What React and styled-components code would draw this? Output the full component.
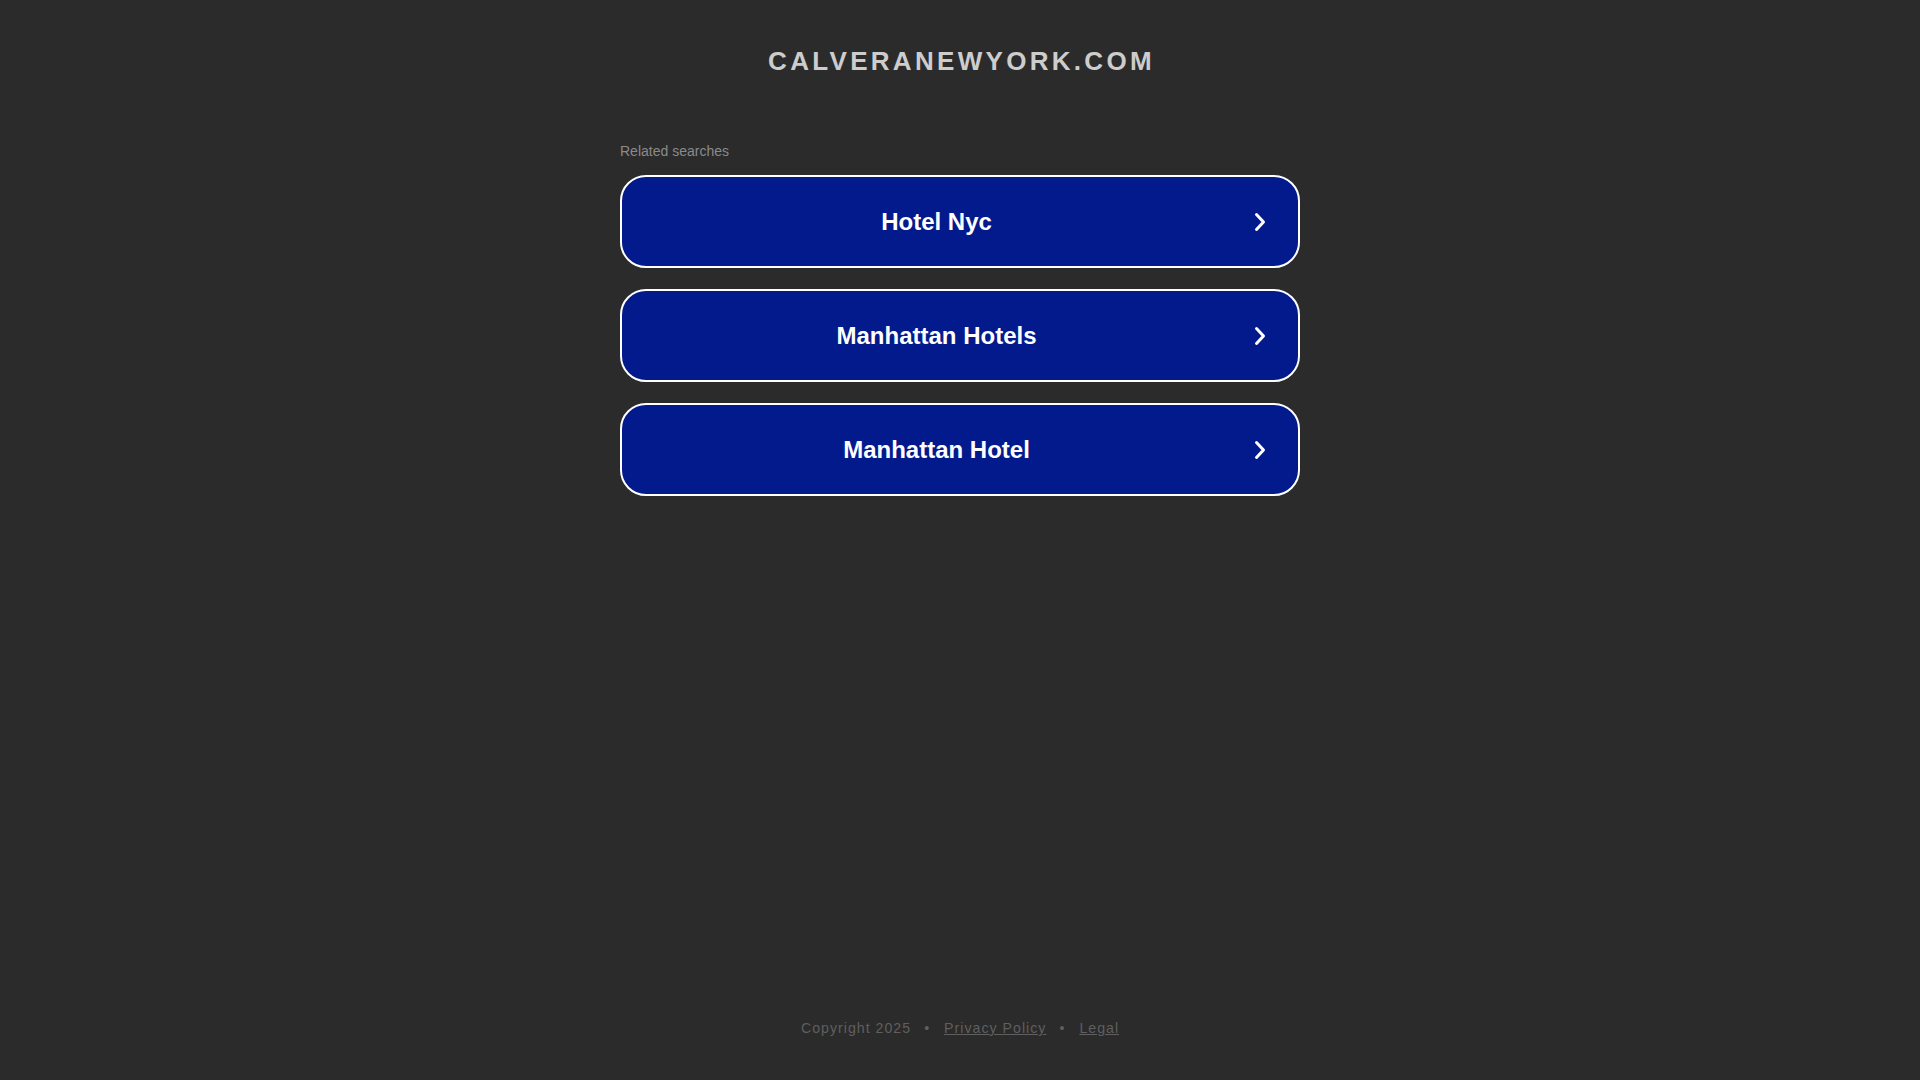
import React from "react";
import styled, { createGlobalStyle } from "styled-components";

const Global = createGlobalStyle`
  html, body { margin: 0; padding: 0; background: #2b2b2b; }
  body { font-family: Arial, "Liberation Sans", sans-serif; }
`;

const Page = styled.div`
  min-height: 100vh;
  display: flex;
  flex-direction: column;
  align-items: center;
  box-sizing: border-box;
`;

const Title = styled.h1`
  margin: 0;
  padding: 46px 0 0 3px;
  font-size: 26px;
  line-height: 30px;
  font-weight: bold;
  letter-spacing: 3.3px;
  color: #cdcdcd;
`;

const Section = styled.div`
  width: 680px;
  margin-top: 66px;
  display: flex;
  flex-direction: column;
`;

const Label = styled.div`
  font-size: 14px;
  line-height: 16px;
  color: #8a8a8a;
  margin-bottom: 16px;
  padding-top: 1px;
`;

const Item = styled.a`
  display: flex;
  align-items: center;
  height: 93px;
  box-sizing: border-box;
  border: 2px solid #ffffff;
  border-radius: 26px;
  background: #021a8c;
  padding-right: 32px;
  margin-bottom: 21px;
  text-decoration: none;
  cursor: pointer;
`;

const ItemText = styled.span`
  flex: 1;
  text-align: center;
  font-size: 24px;
  font-weight: bold;
  color: #ffffff;
  padding-top: 1px;
`;

const Chevron = styled.svg`
  width: 12px;
  height: 20px;
  margin-left: 3px;
  flex: none;
`;

const Footer = styled.footer`
  margin-top: auto;
  padding-bottom: 43px;
  font-size: 14.2px;
  line-height: 18px;
  letter-spacing: 1px;
  color: #5f5f5f;
  display: flex;
  align-items: center;
`;

const Dot = styled.span`
  padding: 0 14px 0 13px;
`;

const FooterLink = styled.a`
  color: #5f5f5f;
  text-decoration: underline;
`;

const items = ["Hotel Nyc", "Manhattan Hotels", "Manhattan Hotel"];

export default function App() {
  return (
    <>
      <Global />
      <Page>
        <Title>CALVERANEWYORK.COM</Title>
        <Section>
          <Label>Related searches</Label>
          {items.map((t) => (
            <Item key={t}>
              <ItemText>{t}</ItemText>
              <Chevron viewBox="0 0 12 20">
                <polyline
                  points="2.5,2.5 9.5,10 2.5,17.5"
                  fill="none"
                  stroke="#fff"
                  strokeWidth="3"
                  strokeLinecap="round"
                  strokeLinejoin="round"
                />
              </Chevron>
            </Item>
          ))}
        </Section>
        <Footer>
          <span>Copyright 2025</span>
          <Dot>•</Dot>
          <FooterLink>Privacy Policy</FooterLink>
          <Dot>•</Dot>
          <FooterLink>Legal</FooterLink>
        </Footer>
      </Page>
    </>
  );
}
